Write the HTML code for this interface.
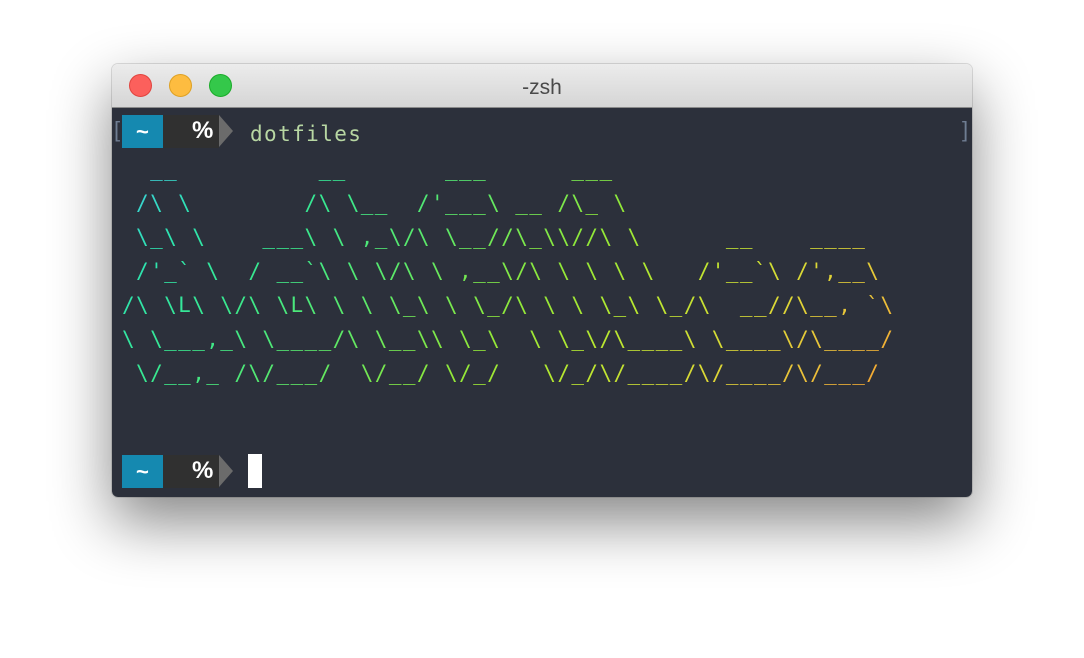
<!DOCTYPE html>
<html><head><meta charset="utf-8"><style>
html,body{margin:0;padding:0;background:#fff;width:1084px;height:658px;overflow:hidden;position:relative;font-family:"Liberation Sans",sans-serif}
.win{position:absolute;left:112px;top:64px;width:860px;height:433px;border-radius:6px;overflow:hidden;box-shadow:0 25px 60px rgba(0,0,0,.48),0 0 0 1px rgba(0,0,0,.12)}
.title{position:absolute;left:0;top:0;width:100%;height:44px;background:linear-gradient(#ececec,#d5d5d5);border-bottom:1px solid #8a8a8a;box-sizing:border-box}
.title .t{position:absolute;left:0;right:0;top:12px;text-align:center;font-size:21px;color:#4a4a4a}
.dot{position:absolute;top:10px;width:23px;height:23px;border-radius:50%;box-sizing:border-box}
.term{position:absolute;left:0;top:44px;width:100%;height:389px;background:#2c303b}
.mono{font-family:"DejaVu Sans Mono","Liberation Mono",monospace;font-size:21px;letter-spacing:1.4px;line-height:34px;white-space:pre}
.art{position:absolute;left:10px;top:44px;margin:0;background:linear-gradient(135deg,#44c4ec 0%,#2ee4b0 13%,#38e890 25%,#5ee866 40%,#92e838 55%,#b8e830 66%,#dcd836 80%,#ecc03a 90%,#f8a030 100%);-webkit-background-clip:text;background-clip:text;color:transparent}
.br{position:absolute;color:#6f7d92;font-size:22px;top:9px}
.b1{position:absolute;left:10px;width:41px;height:33px;background:#1589b0}
.b1:after{content:"";position:absolute;left:41px;top:0;border-left:14px solid #1589b0;border-top:16.5px solid transparent;border-bottom:16.5px solid transparent}
.b2{position:absolute;left:51px;width:56px;height:33px;background:#303030}
.b3{position:absolute;left:107px;width:0;height:0;border-left:14px solid #6b6b6b;border-top:16.5px solid transparent;border-bottom:16.5px solid transparent}
.tl{position:absolute;color:#fff;font-family:"Liberation Sans",sans-serif;font-weight:bold}
</style></head><body>
<div class="win">
 <div class="title">
  <div class="dot" style="left:17px;background:#fc605c;border:1px solid #e0443e"></div>
  <div class="dot" style="left:57px;background:#fdbc40;border:1px solid #dea123"></div>
  <div class="dot" style="left:97px;background:#34c84a;border:1px solid #1aab29"></div>
  <div class="t">-zsh</div>
 </div>
 <div class="term">
  <div class="br" style="left:2px">[</div>
  <div class="br" style="left:850px">]</div>
  <div class="b1" style="top:7px"></div>
  <div class="tl" style="left:24px;top:11px;font-size:22px">~</div>
  <div class="b2" style="top:7px"></div>
  <div class="tl" style="left:80px;top:9px;font-size:24px">%</div>
  <div class="b3" style="top:7px"></div>
  <div class="mono" style="position:absolute;left:138px;top:9px;color:#b8d7a3">dotfiles</div>
<pre class="mono art">  __          __       ___      ___
 /\ \        /\ \__  /'___\ __ /\_ \
 \_\ \    ___\ \ ,_\/\ \__//\_\\//\ \      __    ____
 /'_` \  / __`\ \ \/\ \ ,__\/\ \ \ \ \   /'__`\ /',__\
/\ \L\ \/\ \L\ \ \ \_\ \ \_/\ \ \ \_\ \_/\  __//\__, `\
\ \___,_\ \____/\ \__\\ \_\  \ \_\/\____\ \____\/\____/
 \/__,_ /\/___/  \/__/ \/_/   \/_/\/____/\/____/\/___/</pre>
  <div class="b1" style="top:347px"></div>
  <div class="tl" style="left:24px;top:351px;font-size:22px">~</div>
  <div class="b2" style="top:347px"></div>
  <div class="tl" style="left:80px;top:349px;font-size:24px">%</div>
  <div class="b3" style="top:347px"></div>
  <div style="position:absolute;left:136px;top:346px;width:14px;height:34px;background:#fff"></div>
 </div>
</div>
</body></html>
